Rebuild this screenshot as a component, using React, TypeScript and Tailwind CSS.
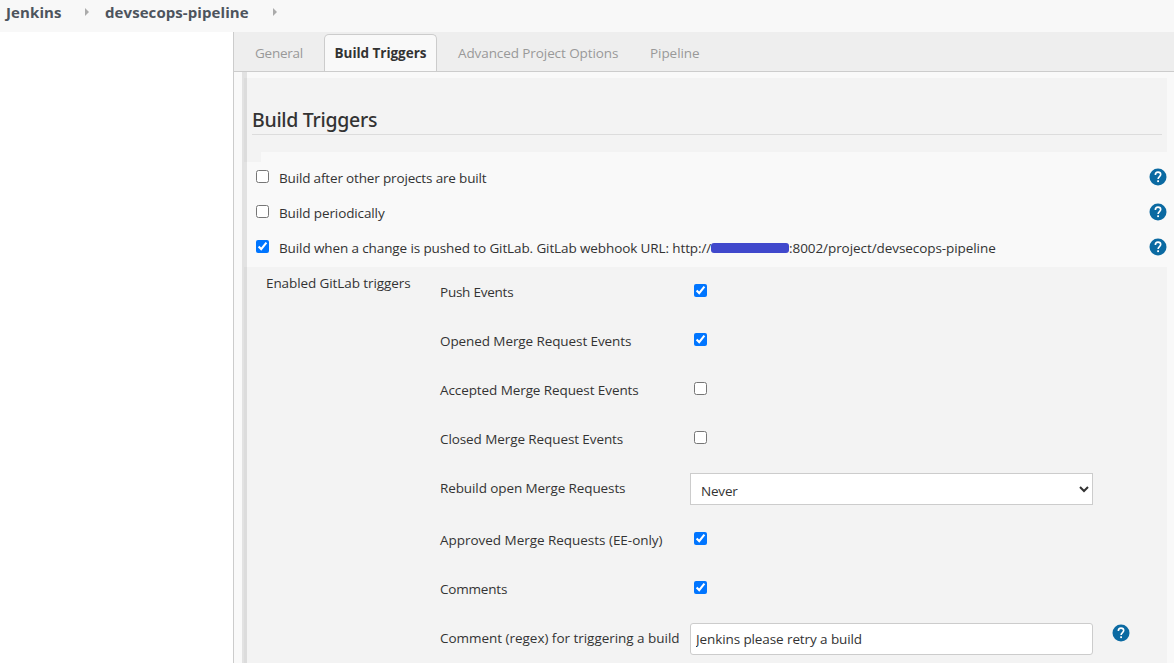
import type { ReactNode } from "react";

function HelpIcon() {
  return (
    <svg className="size-[18px] shrink-0" viewBox="0 0 18 18" aria-label="Help">
      <circle cx="9" cy="9" r="8.5" fill="#0b6aa2" />
      <path
        d="M6.35 6.9C6.35 5.1 7.5 4.1 9 4.1s2.7 1 2.7 2.5C11.7 8.5 9.1 8.7 9.1 11"
        fill="none"
        stroke="#fff"
        strokeWidth="1.6"
      />
      <rect x="8.2" y="12.3" width="1.8" height="1.8" fill="#fff" />
    </svg>
  );
}

function CrumbArrow() {
  return (
    <svg className="h-2 w-1 shrink-0" viewBox="0 0 4 8">
      <path d="M0 0 L4 4 L0 8 Z" fill="#ababab" />
    </svg>
  );
}

function Check({ checked = false }: { checked?: boolean }) {
  return <input type="checkbox" checked={checked} readOnly className="m-0 size-[13px] shrink-0" />;
}

function TriggerOption({ checked, children }: { checked?: boolean; children: ReactNode }) {
  return (
    <div className="flex h-[35px] pl-3">
      <div className="flex w-[23px] pt-[10px]">
        <Check checked={checked} />
      </div>
      <div className="flex flex-1 items-center whitespace-nowrap pt-px leading-[34px]">{children}</div>
      <div className="pt-2">
        <HelpIcon />
      </div>
    </div>
  );
}

function Setting({ label, className = "h-[49px]", children }: { label: ReactNode; className?: string; children: ReactNode }) {
  return (
    <div className={`flex ${className}`}>
      <div className="w-[250px] whitespace-nowrap leading-[50px] tracking-[-0.03px]">{label}</div>
      {children}
    </div>
  );
}

function CheckSetting({ label, checked }: { label: ReactNode; checked?: boolean }) {
  return (
    <Setting label={label}>
      <div className="flex pt-[17px] pl-1">
        <Check checked={checked} />
      </div>
    </Setting>
  );
}

export default function App() {
  return (
    <div className="flex h-[663px] w-[1174px] flex-col overflow-hidden bg-white font-['Open_Sans','Noto_Sans',sans-serif] text-[13.5px] text-[#333]">
      <header className="flex h-8 shrink-0 bg-[#f8f8f8] pl-[6px] text-[15px] font-bold leading-[25px] text-[#4d545d]">
        <span className="w-[79px] tracking-[0.1px]">Jenkins</span>
        <div className="w-5 pt-2">
          <CrumbArrow />
        </div>
        <span className="w-[168px] tracking-[0.08px]">devsecops-pipeline</span>
        <div className="pt-2">
          <CrumbArrow />
        </div>
      </header>

      <div className="flex min-h-0 flex-1">
        <aside className="w-[233px] shrink-0 bg-white" />
        <main className="flex flex-1 flex-col border-l border-[#ccc] bg-[#f9f9f9]">
          <nav className="flex h-10 shrink-0 border-b border-[#ccc] bg-[#eee] pt-0.5 leading-[39px] text-[#999]">
            <div className="w-[90px] pl-[21px] tracking-[-0.25px]">General</div>
            <div className="w-[113px] rounded-t-[5px] border border-b-0 border-[#ccc] bg-[#f9f9f9] text-center font-bold leading-[37px] tracking-[-0.04px] text-[#333]">
              Build Triggers
            </div>
            <div className="w-[213px] pl-[21px] tracking-[-0.09px]">Advanced Project Options</div>
            <div className="tracking-[-0.06px]">Pipeline</div>
          </nav>

          <div className="ml-2 flex flex-1 flex-col border-l-[5px] border-[#e2e2e2] pt-1.5 pr-[7px]">
            <section className="-ml-[3px] h-[74px] shrink-0 bg-black/[0.025] pt-[27px] pr-[5px] pl-2">
              <h2 className="h-[30px] border-b border-[#dcdcdc] font-['Noto_Sans',sans-serif] text-[19.5px] font-medium leading-[29px] tracking-[-0.3px]">
                Build Triggers
              </h2>
            </section>
            <div className="-mb-[10px] -ml-[3px] h-[10px] w-[17px] shrink-0 bg-black/[0.025]" />

            <section className="-ml-[3px] h-[115px] shrink-0 pt-2">
              <TriggerOption>
                <span className="tracking-[-0.16px]">Build after other projects are built</span>
              </TriggerOption>
              <TriggerOption>
                <span className="tracking-[-0.12px]">Build periodically</span>
              </TriggerOption>
              <TriggerOption checked>
                <span className="w-[432px] tracking-[-0.11px]">
                  Build when a change is pushed to GitLab. GitLab webhook URL: http://
                </span>
                <span className="h-[10px] w-[78px] rounded-[3px] bg-[#4048cc]" />
                <span className="tracking-[-0.07px]">:8002/project/devsecops-pipeline</span>
              </TriggerOption>
            </section>

            <section className="-ml-[3px] flex flex-1 bg-black/[0.025] pl-[22px]">
              <div className="w-[174px] shrink-0 leading-[33px] tracking-[-0.09px]">Enabled GitLab triggers</div>
              <div className="flex flex-col">
                <CheckSetting checked label={<span className="tracking-[-0.24px]">Push Events</span>} />
                <CheckSetting checked label={<span className="tracking-[-0.09px]">Opened Merge Request Events</span>} />
                <CheckSetting label={<span className="tracking-[-0.09px]">Accepted Merge Request Events</span>} />
                <CheckSetting label={<span className="tracking-[-0.09px]">Closed Merge Request Events</span>} />
                <Setting
                  className="h-[52px]"
                  label={<span className="tracking-[-0.1px]">Rebuild open Merge Requests</span>}
                >
                  <select className="mt-[10px] h-8 w-[403px] rounded-none border border-[#ccc] bg-white pt-[3px] pl-[6px] tracking-[-0.2px]">
                    <option>Never</option>
                  </select>
                </Setting>
                <CheckSetting checked label="Approved Merge Requests (EE-only)" />
                <CheckSetting checked label={<span className="tracking-[-0.2px]">Comments</span>} />
                <Setting label="Comment (regex) for triggering a build">
                  <input
                    type="text"
                    readOnly
                    value="Jenkins please retry a build"
                    className="mt-[10px] h-8 w-[403px] rounded-[3px] border border-[#ccc] bg-white pr-1 pb-px pl-[5px] tracking-[-0.1px]"
                  />
                  <div className="pt-[11px] pl-[19px]">
                    <HelpIcon />
                  </div>
                </Setting>
              </div>
            </section>
          </div>
        </main>
      </div>
    </div>
  );
}
